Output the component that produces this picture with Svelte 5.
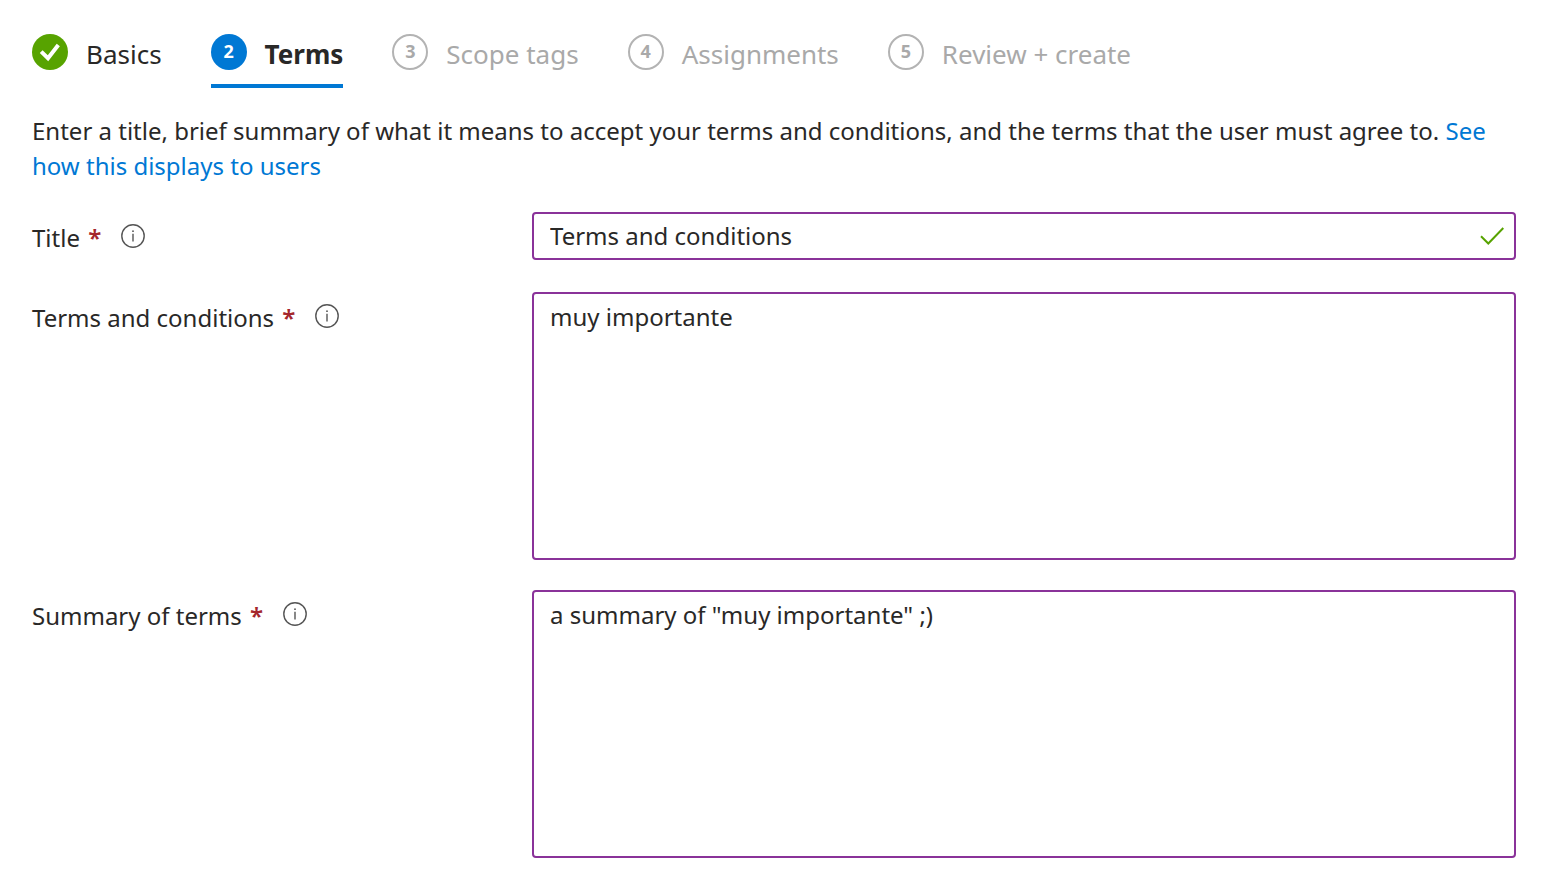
<script lang="ts">
  interface Step {
    label: string;
    state: 'done' | 'current' | 'upcoming';
  }

  const steps: Step[] = [
    { label: 'Basics', state: 'done' },
    { label: 'Terms', state: 'current' },
    { label: 'Scope tags', state: 'upcoming' },
    { label: 'Assignments', state: 'upcoming' },
    { label: 'Review + create', state: 'upcoming' },
  ];

  let title = $state('Terms and conditions');
  let terms = $state('muy importante');
  let summary = $state('a summary of "muy importante" ;)');
</script>

{#snippet info(about: string)}
  <button type="button" class="info" aria-label="About {about}">
    <svg viewBox="0 0 24 24" width="24" height="24" fill="none" stroke="#555" aria-hidden="true">
      <circle cx="12" cy="12" r="11.2" stroke-width="1.4" />
      <path d="M12 9.8v7.7" stroke-width="1.4" />
      <circle cx="12" cy="7.2" r="0.9" fill="#555" stroke="none" />
    </svg>
  </button>
{/snippet}

<main>
  <nav class="steps" aria-label="Steps">
    {#each steps as step, i}
      <button type="button" class="step {step.state}" aria-current={step.state === 'current' ? 'step' : undefined}>
        <span class="badge">
          {#if step.state === 'done'}
            <svg viewBox="0 0 36 36" width="36" height="36" fill="none" aria-hidden="true">
              <path d="M9.2 17.6l6.8 6.6L26.3 11" stroke="#fff" stroke-width="4" />
            </svg>
          {:else}
            {i + 1}
          {/if}
        </span>
        <span>{step.label}</span>
      </button>
    {/each}
  </nav>

  <p class="intro">
    Enter a title, brief summary of what it means to accept your terms and conditions, and the terms that the user must agree to.
    <a href="#preview">See how this displays to users</a>
  </p>

  <form>
    <div class="row title-row">
      <div class="label">
        <label for="title">Title <span class="required">*</span></label>
        {@render info('title')}
      </div>
      <div class="field">
        <input id="title" type="text" bind:value={title} />
        <svg class="valid" viewBox="0 0 24 20" width="24" height="20" fill="none" aria-hidden="true">
          <path d="M1 10.2l7.3 7.3L23.3 2" stroke="#57a300" stroke-width="2" />
        </svg>
      </div>
    </div>

    <div class="row">
      <div class="label">
        <label for="terms">Terms and conditions <span class="required">*</span></label>
        {@render info('terms and conditions')}
      </div>
      <textarea id="terms" bind:value={terms}></textarea>
    </div>

    <div class="row">
      <div class="label">
        <label for="summary">Summary of terms <span class="required">*</span></label>
        {@render info('summary of terms')}
      </div>
      <textarea id="summary" bind:value={summary}></textarea>
    </div>
  </form>
</main>

<style>
  :global(body) {
    background: #fff;
  }

  main {
    padding: 32px 30px 30px 32px;
    font-family: "Noto Sans", "Open Sans", sans-serif;
    font-size: 24px;
    line-height: 35px;
    color: #292827;
  }

  button,
  input,
  textarea {
    font: inherit;
    color: inherit;
  }

  button {
    padding: 0;
    border: none;
    background: none;
    cursor: pointer;
  }

  .steps {
    display: flex;
    gap: 49px;
  }

  .step {
    display: flex;
    gap: 18px;
    height: 56px;
    font-size: 26px;
    line-height: 44px;
    border-bottom: 4px solid transparent;
    box-sizing: border-box;
    white-space: nowrap;
  }

  .step.current {
    border-color: #0078d4;
    font-weight: 700;
  }

  .step.upcoming {
    color: #a9a9a9;
  }

  .badge {
    box-sizing: border-box;
    width: 36px;
    height: 36px;
    margin-top: 2px;
    border-radius: 50%;
    font-size: 18px;
    font-weight: 700;
    line-height: 31px;
    text-align: center;
  }

  .done .badge {
    background: #57a300;
  }

  .current .badge {
    background: #0078d4;
    color: #fff;
    line-height: 35px;
  }

  .upcoming .badge {
    border: 2px solid #b3b3b3;
  }

  .badge svg {
    display: block;
  }

  .intro {
    margin: 25px 0 29px;
  }

  a {
    color: #0078d4;
    text-decoration: none;
  }

  form {
    display: grid;
    gap: 30px;
  }

  .row {
    display: grid;
    grid-template-columns: 500px 1fr;
    align-items: start;
  }

  .title-row {
    margin-bottom: 2px;
  }

  .label {
    display: flex;
    align-items: flex-start;
    gap: 20px;
    padding-top: 8px;
  }

  .required {
    margin-left: 2px;
    color: #a4262c;
    font-weight: 600;
  }

  .info {
    margin-top: 4px;
  }

  .info svg {
    display: block;
  }

  .field {
    position: relative;
  }

  input,
  textarea {
    display: block;
    box-sizing: border-box;
    width: 100%;
    border: 2px solid #8a3299;
    border-radius: 4px;
    background: #fff;
    outline: none;
  }

  input {
    height: 48px;
    padding: 0 56px 2px 16px;
  }

  textarea {
    height: 268px;
    padding: 5px 16px;
    resize: none;
  }

  .valid {
    position: absolute;
    top: 14px;
    right: 12px;
  }
</style>
